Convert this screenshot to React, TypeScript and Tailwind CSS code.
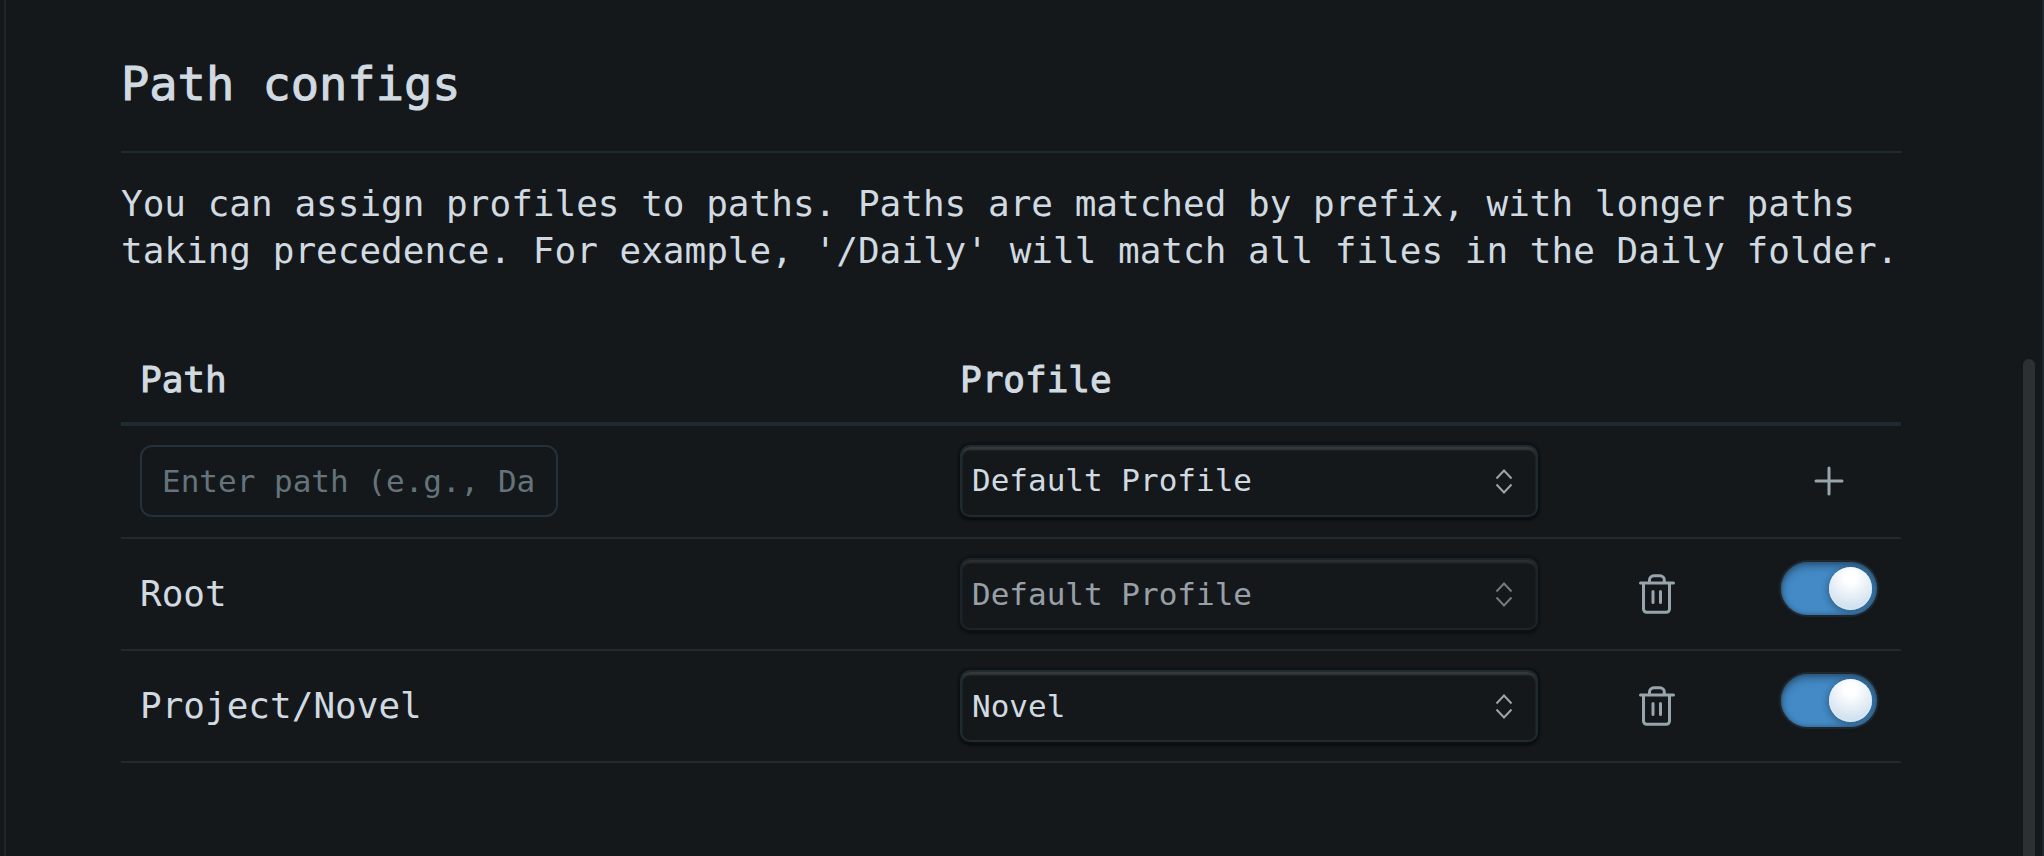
import { useState } from "react";

const profiles = ["Default Profile", "Novel"];

function ProfileSelect({ label, initial, disabled }: { label: string; initial: string; disabled?: boolean }) {
  const [value, setValue] = useState(initial);
  return (
    <div className={disabled ? "relative w-full opacity-70" : "relative w-full"}>
      <select
        aria-label={label}
        value={value}
        disabled={disabled}
        onChange={(e) => setValue(e.target.value)}
        className="block h-[72px] w-full appearance-none rounded-[10px] border-2 border-[#1f2a31] bg-[#14181b] pr-16 pl-[10px] text-[31px] text-[#d1dae1] shadow-[inset_0_3px_2px_#34393c,0_0_2px_2px_#0e1114,0_3px_3px_#040607] outline-none"
      >
        {profiles.map((p) => (
          <option key={p}>{p}</option>
        ))}
      </select>
      <svg
        viewBox="0 0 18 26"
        className="pointer-events-none absolute top-[23px] right-[25px] h-[26px] w-[18px] fill-none stroke-[#a0a3a5] stroke-2"
        aria-hidden="true"
      >
        <path d="M1.500 10.500 9 2.500l7.500 8M1.500 16.500 9 24.500l7.500-8" />
      </svg>
    </div>
  );
}

function Toggle({ label }: { label: string }) {
  const [on, setOn] = useState(true);
  return (
    <input
      type="checkbox"
      role="switch"
      aria-label={label}
      checked={on}
      onChange={() => setOn(!on)}
      className="mx-auto block h-[53px] w-[96px] appearance-none rounded-full bg-[#2a3136] shadow-[inset_0_4px_8px_rgba(0,0,0,0.35),inset_0_0_4px_rgba(0,0,0,0.3),0_0_0_2px_#20272c] before:mt-[5px] before:ml-[5px] before:block before:size-[43px] before:rounded-full before:bg-[radial-gradient(circle_at_50%_25%,#ffffff_15%,#bfd6e9_100%)] before:shadow-[0_2px_6px_2px_rgba(0,0,0,0.25),inset_0_0_2px_#ffffff] checked:bg-[#438ac6] checked:before:ml-[48px]"
    />
  );
}

function TrashIcon() {
  return (
    <svg
      viewBox="0 0 36 41"
      className="h-[41px] w-[36px] fill-none stroke-[#98a5ad] stroke-3"
      strokeLinecap="round"
      strokeLinejoin="round"
      aria-hidden="true"
    >
      <path d="M1.500 9h33M4.500 9v26a3.300 3.300 0 0 0 3.300 3.300h19.400a3.300 3.300 0 0 0 3.300-3.300V9M10.500 9V6a4.300 4.300 0 0 1 4.300-4.300h6.200a4.300 4.300 0 0 1 4.300 4.300v3M14 17.500v11M21.500 17.500v11" />
    </svg>
  );
}

const rows = [
  { path: "Root", profile: "Default Profile", disabled: true },
  { path: "Project/Novel", profile: "Novel", disabled: false },
];

export default function App() {
  return (
    <div className="flex min-h-screen bg-[#14181b] pl-1 font-['DejaVu_Sans_Mono',monospace] text-[36px] leading-[47px] text-[#d1dae1]">
      <main className="flex-1 border-l-2 border-[#1e262b] pt-14 pr-[122px] pb-14 pl-[115px]">
        <h1 className="border-b-2 border-[#1f2a31] pb-[39px] text-[47px] leading-[56px] font-normal [-webkit-text-stroke:1px]">
          Path configs
        </h1>
        <p className="mt-[27px]">
          You can assign profiles to paths. Paths are matched by prefix, with longer paths taking precedence. For
          example, '/Daily' will match all files in the Daily folder.
        </p>
        <table className="mt-16 w-full table-fixed border-separate border-spacing-0 text-left">
          <colgroup>
            <col />
            <col className="w-[616px]" />
            <col className="w-[199px]" />
            <col className="w-[145px]" />
          </colgroup>
          <thead>
            <tr className="h-[88px] *:border-b-4 *:border-[#1f2a31] *:px-[19px] *:pb-0.5 *:font-normal">
              <th scope="col" className="[-webkit-text-stroke:1px]">Path</th>
              <th scope="col" className="[-webkit-text-stroke:1px]">Profile</th>
              <td />
              <td />
            </tr>
          </thead>
          <tbody className="[&_td]:border-b-2 [&_td]:border-[#1f2a31]">
            <tr className="h-[113px] *:pb-0.5">
              <td className="px-[19px]">
                <input
                  type="text"
                  aria-label="Path"
                  placeholder="Enter path (e.g., Daily)"
                  className="block h-[72px] w-[418px] rounded-[12px] border-2 border-[#25313a] bg-transparent px-5 text-[31px] outline-none placeholder:text-[#65737c]"
                />
              </td>
              <td className="px-[19px]">
                <ProfileSelect label="Profile for new path" initial="Default Profile" />
              </td>
              <td />
              <td>
                <button type="button" aria-label="Add path" className="mx-auto block">
                  <svg
                    viewBox="0 0 30 30"
                    className="size-[30px] fill-none stroke-[#98a5ad] stroke-3"
                    strokeLinecap="round"
                    aria-hidden="true"
                  >
                    <path d="M15 2v26M2 15h26" />
                  </svg>
                </button>
              </td>
            </tr>
            {rows.map((row) => (
              <tr key={row.path} className="h-[112px]">
                <td className="px-[19px] pb-0.5">{row.path}</td>
                <td className="px-[19px]">
                  <ProfileSelect label={"Profile for " + row.path} initial={row.profile} disabled={row.disabled} />
                </td>
                <td>
                  <button type="button" aria-label={"Delete " + row.path} className="mx-auto block">
                    <TrashIcon />
                  </button>
                </td>
                <td className="pt-[23px] align-top">
                  <Toggle label={"Enable " + row.path} />
                </td>
              </tr>
            ))}
          </tbody>
        </table>
      </main>
      <div className="flex w-[21px] border-r-2 border-[#1e262b] pt-[359px]" aria-hidden="true">
        <div className="w-3 rounded-t-full bg-[#2c3032]" />
      </div>
    </div>
  );
}
